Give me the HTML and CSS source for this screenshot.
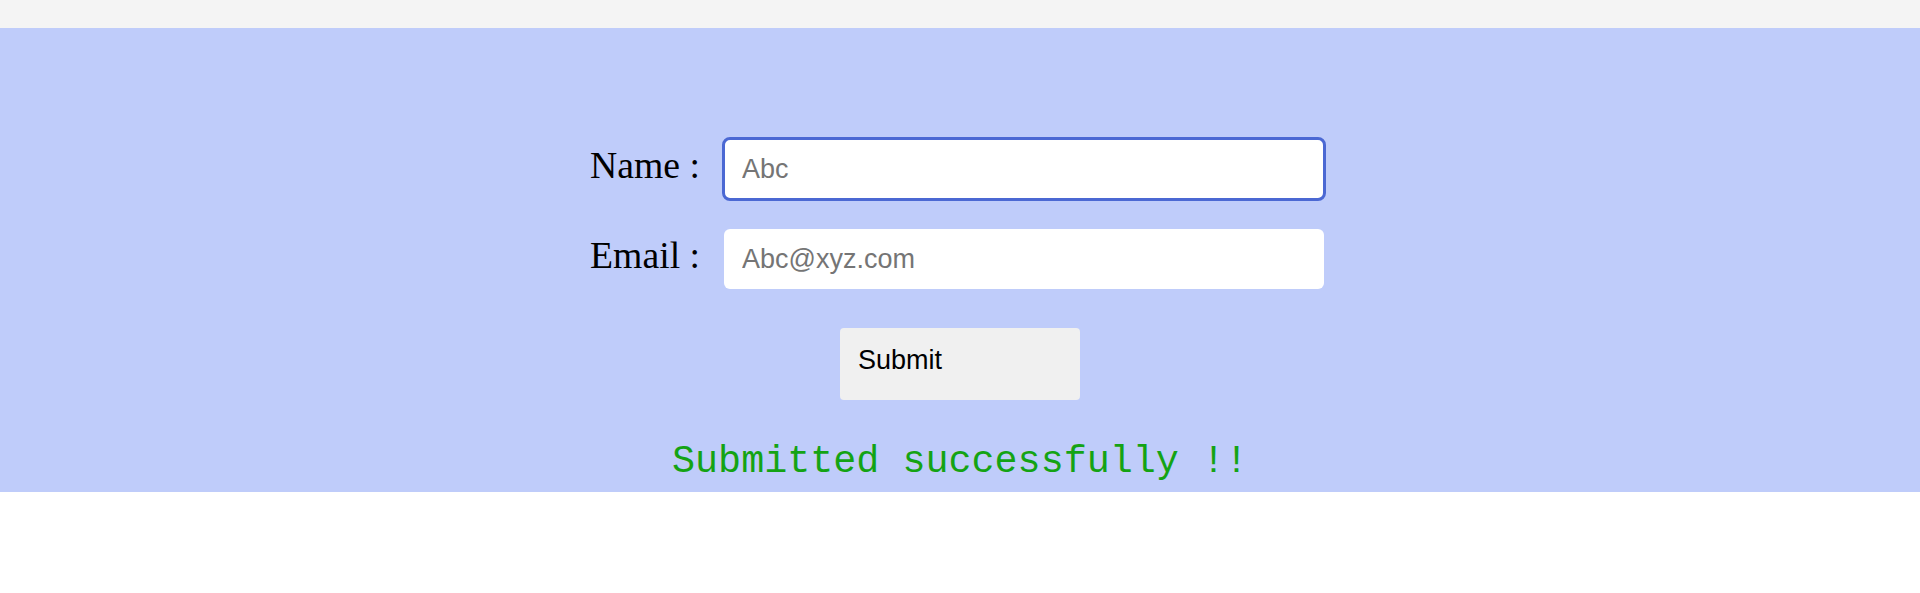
FILE: index.html
```html
<!DOCTYPE html>
<html lang="en">
<head>
<meta charset="utf-8">
<title>Form</title>
<link rel="stylesheet" href="styles.css">
</head>
<body>
<div class="topbar"></div>
<section class="panel">
  <form class="form">
    <label class="label" for="name">Name :</label>
    <input class="field field-focused" id="name" type="text" placeholder="Abc">
    <label class="label" for="email">Email :</label>
    <input class="field" id="email" type="email" placeholder="Abc@xyz.com">
  </form>
  <div class="actions">
    <button class="submit" type="button">Submit</button>
  </div>
  <p class="message">Submitted successfully !!</p>
</section>
</body>
</html>
```
FILE: styles.css
```css
html, body {
  margin: 0;
  padding: 0;
  background: #ffffff;
  font-family: "Liberation Serif", "Times New Roman", serif;
}

.topbar {
  height: 28px;
  background: #f4f4f4;
}

.panel {
  background: #bfccfa;
  padding: 111px 0 8px;
}

.form {
  display: grid;
  grid-template-columns: 112px 600px;
  column-gap: 24px;
  row-gap: 30px;
  align-items: baseline;
  width: fit-content;
  margin: 0 auto;
  padding-right: 8px;
}

.label {
  justify-self: end;
  font-family: "Liberation Serif", "Times New Roman", serif;
  font-size: 37.7px;
  color: #000000;
}

.field {
  box-sizing: border-box;
  width: 600px;
  height: 60px;
  padding: 0 18px;
  border: none;
  border-radius: 6px;
  background: #ffffff;
  font-family: "Liberation Sans", Arial, sans-serif;
  font-size: 27px;
  color: #000000;
  outline: none;
}

.field::placeholder {
  color: #757575;
}

.field-focused {
  outline: 3px solid #4b68d3;
  outline-offset: -1px;
}

.actions {
  display: flex;
  justify-content: center;
  margin-top: 39px;
}

.submit {
  box-sizing: border-box;
  width: 240px;
  height: 72px;
  padding: 17px 18px 24px;
  border: none;
  border-radius: 4px;
  background: #f0f0f0;
  font-family: "Liberation Sans", Arial, sans-serif;
  font-size: 27px;
  color: #000000;
  text-align: left;
  line-height: normal;
}

.message {
  margin: 40px 0 0;
  text-align: center;
  font-family: "Liberation Mono", "Courier New", monospace;
  font-size: 38.4px;
  color: #14a314;
}
```
